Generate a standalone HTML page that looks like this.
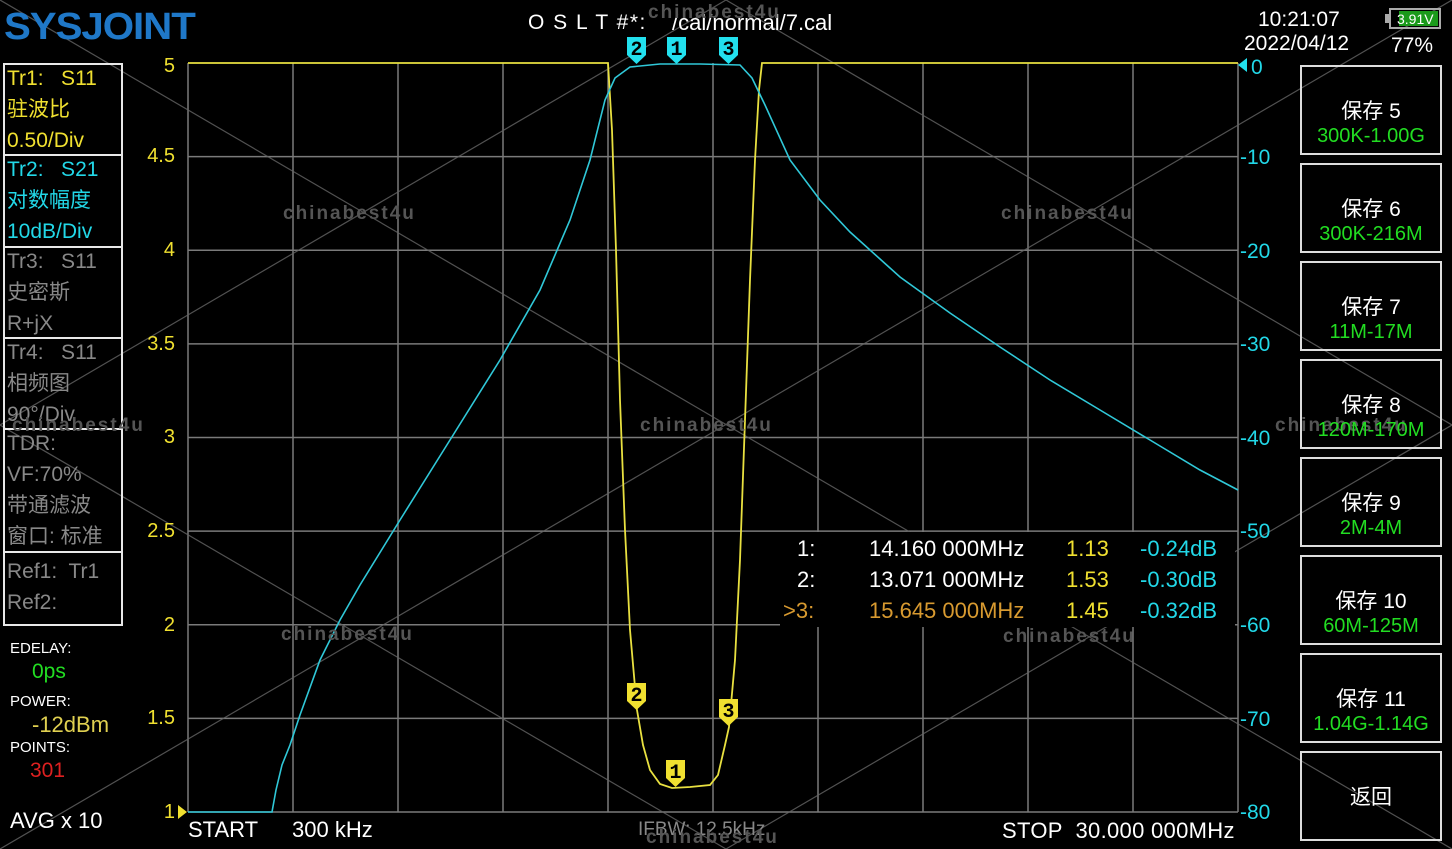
<!DOCTYPE html>
<html><head><meta charset="utf-8"><style>
body{margin:0;width:1452px;height:849px;background:#000;overflow:hidden;position:relative;font-family:"Liberation Sans","Noto Sans CJK SC",sans-serif;}
.t{position:absolute;white-space:nowrap;}
.box{position:absolute;border:2px solid #e8e8e8;box-sizing:border-box;}
.lp{position:absolute;left:7px;font-size:21px;line-height:31px;}
.btn{position:absolute;left:1300px;width:142px;border:2px solid #ddd;box-sizing:border-box;text-align:center;color:#fff;font-size:21px;}
.btn b{display:block;font-weight:normal;color:#22dd22;font-size:20px;}
</style></head><body>
<svg width="1452" height="849" style="position:absolute;left:0;top:0">
<g stroke="#7a7a7a" stroke-width="1.5">
<line x1="188" y1="63" x2="188" y2="812"/><line x1="293" y1="63" x2="293" y2="812"/><line x1="398" y1="63" x2="398" y2="812"/><line x1="503" y1="63" x2="503" y2="812"/><line x1="608" y1="63" x2="608" y2="812"/><line x1="713" y1="63" x2="713" y2="812"/><line x1="818" y1="63" x2="818" y2="812"/><line x1="923" y1="63" x2="923" y2="812"/><line x1="1028" y1="63" x2="1028" y2="812"/><line x1="1133" y1="63" x2="1133" y2="812"/><line x1="1238" y1="63" x2="1238" y2="812"/>
<line x1="188" y1="156.6" x2="1238" y2="156.6"/><line x1="188" y1="250.3" x2="1238" y2="250.3"/><line x1="188" y1="343.9" x2="1238" y2="343.9"/><line x1="188" y1="437.5" x2="1238" y2="437.5"/><line x1="188" y1="531.1" x2="1238" y2="531.1"/><line x1="188" y1="624.8" x2="1238" y2="624.8"/><line x1="188" y1="718.4" x2="1238" y2="718.4"/><line x1="188" y1="812" x2="1238" y2="812"/>
</g>
<g stroke="#666" stroke-width="1.2" opacity="0.8">
<line x1="0" y1="0" x2="1452" y2="849"/><line x1="0" y1="849" x2="1452" y2="0"/>
<line x1="0" y1="425" x2="726" y2="0"/><line x1="726" y1="849" x2="1452" y2="425"/>
<line x1="0" y1="425" x2="726" y2="849"/><line x1="726" y1="0" x2="1452" y2="425"/>
</g>
<rect x="780" y="532" width="455" height="95" fill="#000"/>
<polyline fill="none" stroke="#e8e040" stroke-width="1.8" points="188,63 608,63 612,130 616,250 620,400 625,530 630,630 637,710 643,745 650,770 660,784 672,788 690,787 710,785 718,775 725,745 729,727 735,660 740,560 745,420 750,280 755,160 759,90 762,63 1238,63"/>
<polyline fill="none" stroke="#30c8d8" stroke-width="1.6" points="188,812 272,812 276,790 282,765 290,745 300,715 320,660 340,620 360,585 400,520 450,440 500,360 540,290 570,220 590,160 605,100 615,78 630,67 660,64 700,64 740,65 752,78 765,105 790,160 820,200 850,232 900,277 950,313 1000,347 1050,380 1100,410 1150,440 1200,470 1238,490"/>
<g font-family="Liberation Mono,monospace" font-weight="bold" font-size="20" text-anchor="middle">
<g fill="#22e0ee"><path d="M627,37h19v18l-9.5,9l-9.5,-9z"/><path d="M667,37h19v18l-9.5,9l-9.5,-9z"/><path d="M719,37h19v18l-9.5,9l-9.5,-9z"/></g>
<g fill="#000"><text x="636.5" y="55">2</text><text x="676.5" y="55">1</text><text x="728.5" y="55">3</text></g>
<g fill="#f0e030"><path d="M627,683h19v18l-9.5,9l-9.5,-9z"/><path d="M666,760h19v18l-9.5,9l-9.5,-9z"/><path d="M719,699h19v18l-9.5,9l-9.5,-9z"/></g>
<g fill="#000"><text x="636.5" y="701">2</text><text x="675.5" y="778">1</text><text x="728.5" y="717">3</text></g>
</g>
<path d="M1247,58v14l-9,-7z" fill="#22e0ee"/>
<path d="M178,805v14l9,-7z" fill="#f0e030"/>
<rect x="1390" y="9" width="50" height="19" fill="none" stroke="#aaa" stroke-width="2"/><rect x="1385" y="14" width="5" height="9" fill="#aaa"/><rect x="1399" y="11" width="39" height="15" fill="#1a9a1a"/>
<text x="1397" y="24" fill="#fff" font-size="14" font-family="Liberation Sans">3.91V</text>
</svg>
<div class="t" style="left:4px;top:6px;font-size:38px;font-weight:bold;color:#1f78c8;letter-spacing:-1px;transform:scaleX(1.06);transform-origin:left">SYSJOINT</div>
<div class="t" style="left:528px;top:11px;color:#fff;font-size:21px;letter-spacing:1.5px">O S L T #*:</div>
<div class="t" style="left:672px;top:10px;color:#fff;font-size:22px">/cal/normal/7.cal</div>
<div class="t" style="left:1258px;top:8px;color:#fff;font-size:21px">10:21:07</div>
<div class="t" style="left:1244px;top:32px;color:#fff;font-size:21px">2022/04/12</div>
<div class="t" style="left:1391px;top:34px;color:#fff;font-size:21px">77%</div>
<div class="box" style="left:3px;top:63px;width:120px;height:93px"></div>
<div class="box" style="left:3px;top:154px;width:120px;height:94px"></div>
<div class="box" style="left:3px;top:246px;width:120px;height:93px"></div>
<div class="box" style="left:3px;top:337px;width:120px;height:93px"></div>
<div class="box" style="left:3px;top:428px;width:120px;height:125px"></div>
<div class="box" style="left:3px;top:551px;width:120px;height:75px"></div>
<div class="lp" style="top:63px;color:#f0e030">Tr1:&nbsp;&nbsp; S11<br>驻波比<br>0.50/Div</div>
<div class="lp" style="top:154px;color:#22d8e8">Tr2:&nbsp;&nbsp; S21<br>对数幅度<br>10dB/Div</div>
<div class="lp" style="top:246px;color:#888">Tr3:&nbsp;&nbsp; S11<br>史密斯<br>R+jX</div>
<div class="lp" style="top:337px;color:#888">Tr4:&nbsp;&nbsp; S11<br>相频图<br>90°/Div</div>
<div class="lp" style="top:428px;color:#888">TDR:<br>VF:70%<br>带通滤波<br>窗口: 标准</div>
<div class="lp" style="top:556px;color:#888">Ref1:&nbsp; Tr1<br>Ref2:</div>
<div class="t" style="left:10px;top:640px;color:#fff;font-size:15px">EDELAY:</div>
<div class="t" style="left:32px;top:660px;color:#22dd22;font-size:21px">0ps</div>
<div class="t" style="left:10px;top:693px;color:#fff;font-size:15px">POWER:</div>
<div class="t" style="left:32px;top:712px;color:#e0d050;font-size:22px">-12dBm</div>
<div class="t" style="left:10px;top:739px;color:#fff;font-size:15px">POINTS:</div>
<div class="t" style="left:30px;top:759px;color:#dd2020;font-size:21px">301</div>
<div class="t" style="left:10px;top:808px;color:#fff;font-size:22px">AVG x 10</div>
<div style="position:absolute;left:120px;top:0;width:55px;color:#f0e030;font-size:20px;text-align:right;line-height:1">
<div class="t" style="right:0;top:56px">5</div><div class="t" style="right:0;top:146px">4.5</div><div class="t" style="right:0;top:240px">4</div><div class="t" style="right:0;top:334px">3.5</div><div class="t" style="right:0;top:427px">3</div><div class="t" style="right:0;top:521px">2.5</div><div class="t" style="right:0;top:615px">2</div><div class="t" style="right:0;top:708px">1.5</div><div class="t" style="right:0;top:802px">1</div></div>
<div style="color:#22d8e8;font-size:21px;line-height:1">
<div class="t" style="left:1251px;top:57px">0</div><div class="t" style="left:1240px;top:147px">-10</div><div class="t" style="left:1240px;top:241px">-20</div><div class="t" style="left:1240px;top:334px">-30</div><div class="t" style="left:1240px;top:428px">-40</div><div class="t" style="left:1240px;top:521px">-50</div><div class="t" style="left:1240px;top:615px">-60</div><div class="t" style="left:1240px;top:709px">-70</div><div class="t" style="left:1240px;top:802px">-80</div></div>
<div style="font-size:22px;line-height:31px">
<div class="t" style="left:797px;top:533px;color:#fff">1:</div><div class="t" style="left:869px;top:533px;color:#fff">14.160 000MHz</div><div class="t" style="left:1066px;top:533px;color:#f0e030">1.13</div><div class="t" style="left:1140px;top:533px;color:#22d8e8">-0.24dB</div>
<div class="t" style="left:797px;top:564px;color:#fff">2:</div><div class="t" style="left:869px;top:564px;color:#fff">13.071 000MHz</div><div class="t" style="left:1066px;top:564px;color:#f0e030">1.53</div><div class="t" style="left:1140px;top:564px;color:#22d8e8">-0.30dB</div>
<div class="t" style="left:783px;top:595px;color:#d89a30">&gt;3:</div><div class="t" style="left:869px;top:595px;color:#d89a30">15.645 000MHz</div><div class="t" style="left:1066px;top:595px;color:#f0e030">1.45</div><div class="t" style="left:1140px;top:595px;color:#22d8e8">-0.32dB</div></div>
<div class="t" style="left:188px;top:817px;color:#fff;font-size:22px">START</div>
<div class="t" style="left:292px;top:817px;color:#fff;font-size:22px">300 kHz</div>
<div class="t" style="left:638px;top:819px;color:#888;font-size:19px">IFBW: 12.5kHz</div>
<div class="t" style="left:1002px;top:818px;color:#fff;font-size:22px;letter-spacing:0.3px">STOP&nbsp; 30.000 000MHz</div>
<div style="color:#555;font-size:19px;font-weight:bold;letter-spacing:2px">
<div class="t" style="left:283px;top:203px">chinabest4u</div><div class="t" style="left:1001px;top:203px">chinabest4u</div><div class="t" style="left:640px;top:415px">chinabest4u</div><div class="t" style="left:12px;top:415px">chinabest4u</div><div class="t" style="left:1275px;top:415px">chinabest4u</div><div class="t" style="left:281px;top:624px">chinabest4u</div><div class="t" style="left:1003px;top:626px">chinabest4u</div><div class="t" style="left:648px;top:2px">chinabest4u</div><div class="t" style="left:646px;top:827px">chinabest4u</div></div>
<div class="btn" style="top:65px;height:90px;padding-top:28px">保存 5<b>300K-1.00G</b></div>
<div class="btn" style="top:163px;height:90px;padding-top:28px">保存 6<b>300K-216M</b></div>
<div class="btn" style="top:261px;height:90px;padding-top:28px">保存 7<b>11M-17M</b></div>
<div class="btn" style="top:359px;height:90px;padding-top:28px">保存 8<b>120M-170M</b></div>
<div class="btn" style="top:457px;height:90px;padding-top:28px">保存 9<b>2M-4M</b></div>
<div class="btn" style="top:555px;height:90px;padding-top:28px">保存 10<b>60M-125M</b></div>
<div class="btn" style="top:653px;height:90px;padding-top:28px">保存 11<b>1.04G-1.14G</b></div>
<div class="btn" style="top:751px;height:90px;padding-top:28px">返回</div>
</body></html>
